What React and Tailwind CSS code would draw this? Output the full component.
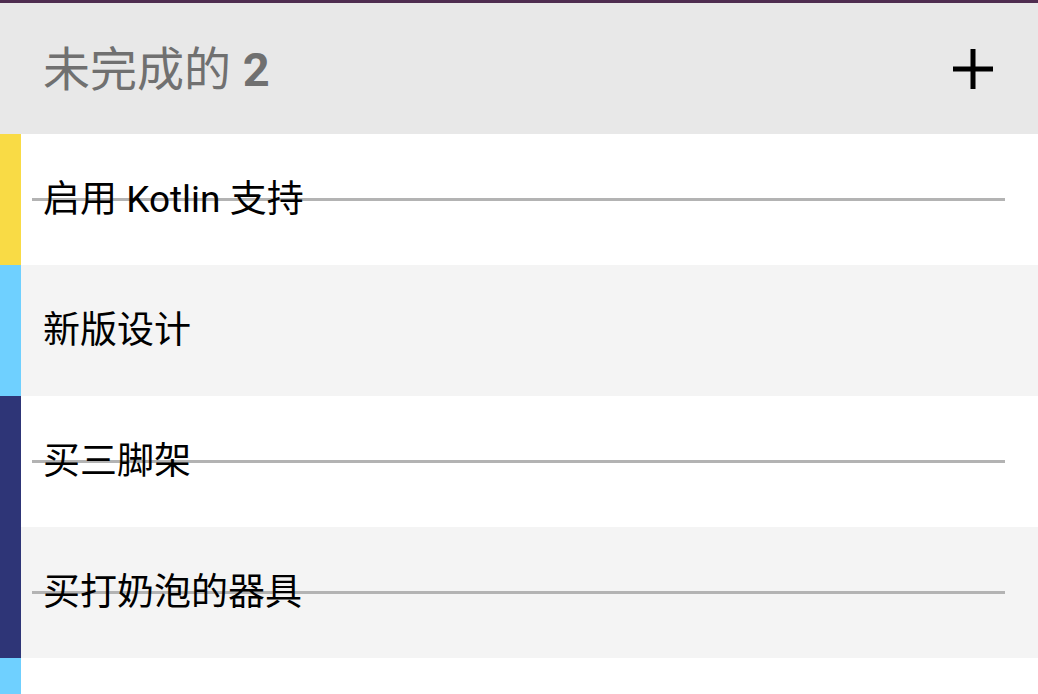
import React from "react";

const items = [
  { text: "启用 Kotlin 支持", color: "bg-[#f9db45]", bg: "bg-white", done: true },
  { text: "新版设计", color: "bg-[#6fd0ff]", bg: "bg-[#f4f4f4]", done: false },
  { text: "买三脚架", color: "bg-[#2e3577]", bg: "bg-white", done: true },
  { text: "买打奶泡的器具", color: "bg-[#2e3577]", bg: "bg-[#f4f4f4]", done: true },
  { text: "", color: "bg-[#6fd0ff]", bg: "bg-white", done: false },
];

export default function App() {
  return (
    <div
      className="w-[1038px] h-[694px] overflow-hidden bg-white flex flex-col"
      style={{ fontFamily: 'Roboto, "Noto Sans CJK SC", sans-serif' }}
    >
      <div className="h-[3px] shrink-0 bg-[#4f2d50]" />
      <div className="h-[131px] shrink-0 bg-[#e8e8e8] flex items-center justify-between pl-[43px] pr-[45px]">
        <div className="text-[47px] leading-none text-[#707070] pt-[2px]">
          未完成的 <span className="font-bold">2</span>
        </div>
        <svg width="40" height="40" viewBox="0 0 40 40">
          <rect x="17.5" y="0" width="5" height="40" fill="#000" />
          <rect x="0" y="17.5" width="40" height="5" fill="#000" />
        </svg>
      </div>
      {items.map((it, i) => (
        <div key={i} className={`h-[131px] shrink-0 flex ${it.bg}`}>
          <div className={`w-[21px] shrink-0 ${it.color}`} />
          <div className="relative flex-1 flex items-center pl-[22px]">
            {it.done && (
              <div className="absolute left-[11px] right-[33px] top-[64px] h-[3px] bg-[#b3b3b3]" />
            )}
            <span className="relative text-[37px] leading-none text-black">{it.text}</span>
          </div>
        </div>
      ))}
    </div>
  );
}
